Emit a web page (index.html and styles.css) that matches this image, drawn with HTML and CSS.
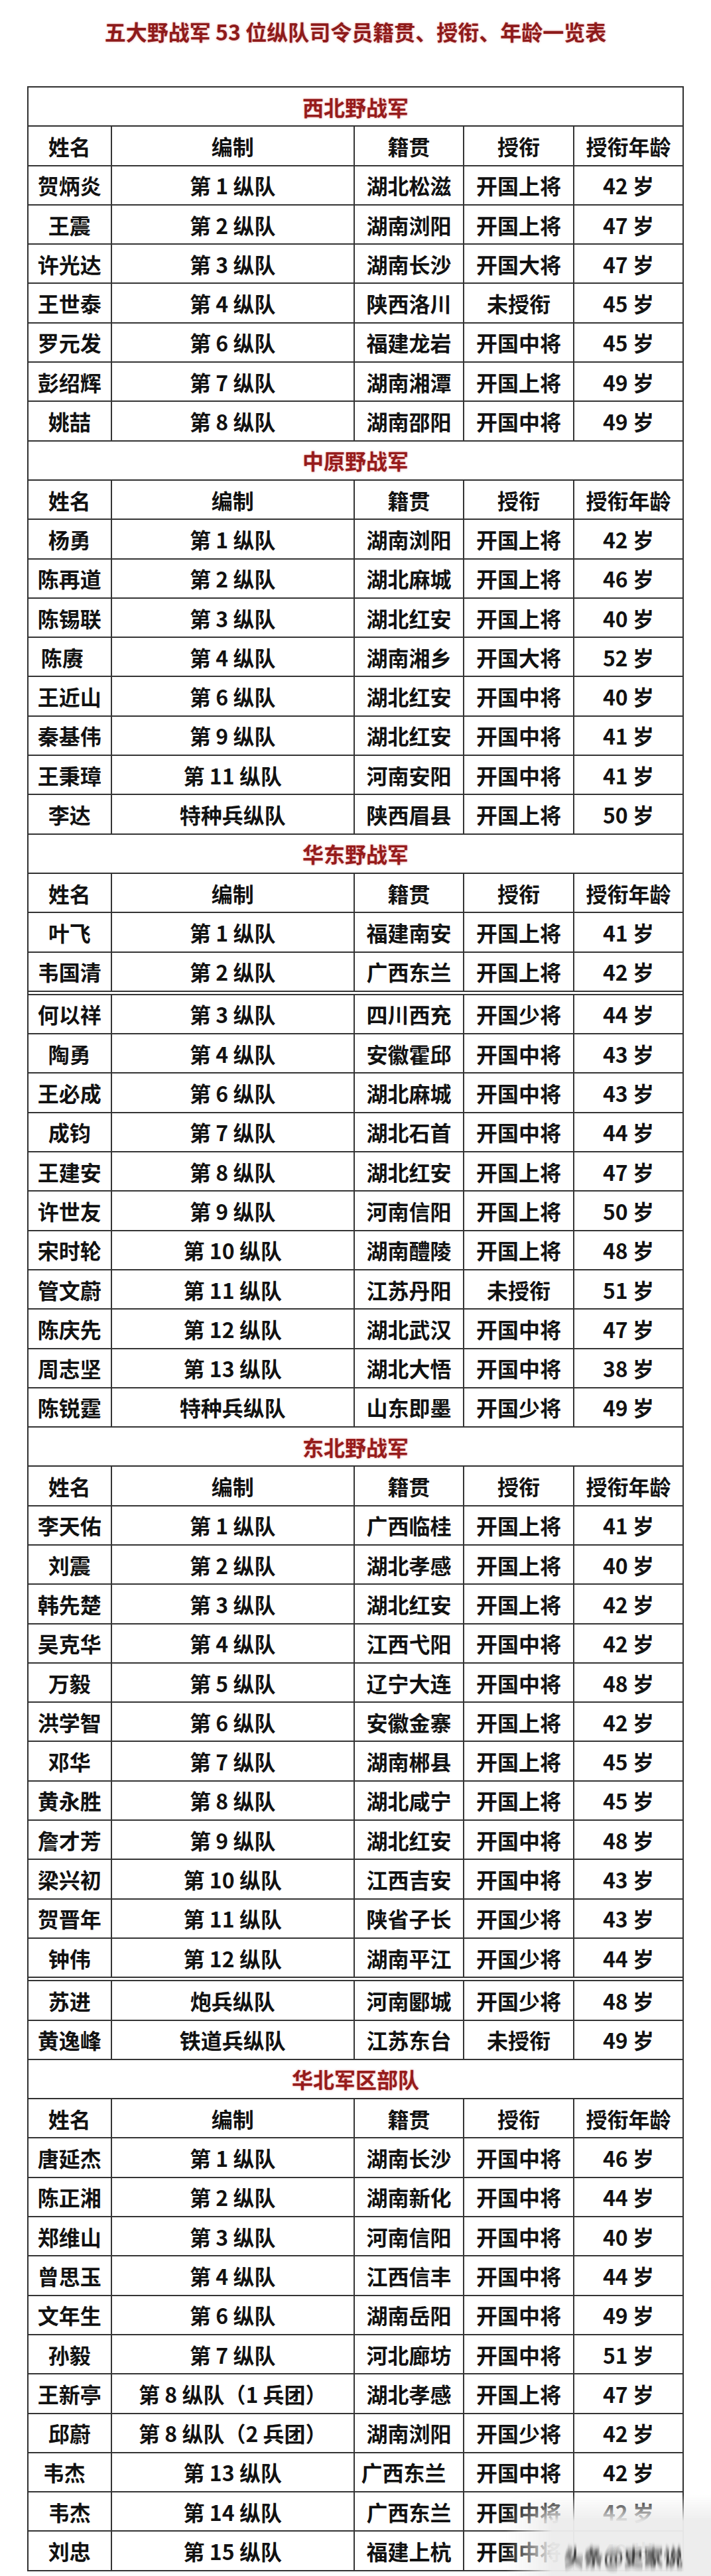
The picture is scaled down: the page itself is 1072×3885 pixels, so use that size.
FILE: index.html
```html
<!DOCTYPE html>
<html lang="zh-CN">
<head>
<meta charset="utf-8">
<title>五大野战军 53 位纵队司令员籍贯、授衔、年龄一览表</title>
<link rel="stylesheet" href="styles.css">
</head>
<body>
<div class="page">
  <h1 class="title">五大野战军 53 位纵队司令员籍贯、授衔、年龄一览表</h1>

  <div class="sheet">
    <div class="sec">西北野战军</div>
    <div class="row"><span>姓名</span><span>编制</span><span>籍贯</span><span>授衔</span><span>授衔年龄</span></div>
    <div class="row"><span>贺炳炎</span><span>第 1 纵队</span><span>湖北松滋</span><span>开国上将</span><span>42 岁</span></div>
    <div class="row"><span>王震</span><span>第 2 纵队</span><span>湖南浏阳</span><span>开国上将</span><span>47 岁</span></div>
    <div class="row"><span>许光达</span><span>第 3 纵队</span><span>湖南长沙</span><span>开国大将</span><span>47 岁</span></div>
    <div class="row"><span>王世泰</span><span>第 4 纵队</span><span>陕西洛川</span><span>未授衔</span><span>45 岁</span></div>
    <div class="row"><span>罗元发</span><span>第 6 纵队</span><span>福建龙岩</span><span>开国中将</span><span>45 岁</span></div>
    <div class="row"><span>彭绍辉</span><span>第 7 纵队</span><span>湖南湘潭</span><span>开国上将</span><span>49 岁</span></div>
    <div class="row"><span>姚喆</span><span>第 8 纵队</span><span>湖南邵阳</span><span>开国中将</span><span>49 岁</span></div>

    <div class="sec">中原野战军</div>
    <div class="row"><span>姓名</span><span>编制</span><span>籍贯</span><span>授衔</span><span>授衔年龄</span></div>
    <div class="row"><span>杨勇</span><span>第 1 纵队</span><span>湖南浏阳</span><span>开国上将</span><span>42 岁</span></div>
    <div class="row"><span>陈再道</span><span>第 2 纵队</span><span>湖北麻城</span><span>开国上将</span><span>46 岁</span></div>
    <div class="row"><span>陈锡联</span><span>第 3 纵队</span><span>湖北红安</span><span>开国上将</span><span>40 岁</span></div>
    <div class="row"><span class="lean">陈赓</span><span>第 4 纵队</span><span>湖南湘乡</span><span>开国大将</span><span>52 岁</span></div>
    <div class="row"><span>王近山</span><span>第 6 纵队</span><span>湖北红安</span><span>开国中将</span><span>40 岁</span></div>
    <div class="row"><span>秦基伟</span><span>第 9 纵队</span><span>湖北红安</span><span>开国中将</span><span>41 岁</span></div>
    <div class="row"><span>王秉璋</span><span>第 11 纵队</span><span>河南安阳</span><span>开国中将</span><span>41 岁</span></div>
    <div class="row"><span>李达</span><span>特种兵纵队</span><span>陕西眉县</span><span>开国上将</span><span>50 岁</span></div>

    <div class="sec">华东野战军</div>
    <div class="row"><span>姓名</span><span>编制</span><span>籍贯</span><span>授衔</span><span>授衔年龄</span></div>
    <div class="row"><span>叶飞</span><span>第 1 纵队</span><span>福建南安</span><span>开国上将</span><span>41 岁</span></div>
    <div class="row"><span>韦国清</span><span>第 2 纵队</span><span>广西东兰</span><span>开国上将</span><span>42 岁</span></div>
    <div class="row seam"><span>何以祥</span><span>第 3 纵队</span><span>四川西充</span><span>开国少将</span><span>44 岁</span></div>
    <div class="row"><span>陶勇</span><span>第 4 纵队</span><span>安徽霍邱</span><span>开国中将</span><span>43 岁</span></div>
    <div class="row"><span>王必成</span><span>第 6 纵队</span><span>湖北麻城</span><span>开国中将</span><span>43 岁</span></div>
    <div class="row"><span>成钧</span><span>第 7 纵队</span><span>湖北石首</span><span>开国中将</span><span>44 岁</span></div>
    <div class="row"><span>王建安</span><span>第 8 纵队</span><span>湖北红安</span><span>开国上将</span><span>47 岁</span></div>
    <div class="row"><span>许世友</span><span>第 9 纵队</span><span>河南信阳</span><span>开国上将</span><span>50 岁</span></div>
    <div class="row"><span>宋时轮</span><span>第 10 纵队</span><span>湖南醴陵</span><span>开国上将</span><span>48 岁</span></div>
    <div class="row"><span>管文蔚</span><span>第 11 纵队</span><span>江苏丹阳</span><span>未授衔</span><span>51 岁</span></div>
    <div class="row"><span>陈庆先</span><span>第 12 纵队</span><span>湖北武汉</span><span>开国中将</span><span>47 岁</span></div>
    <div class="row"><span>周志坚</span><span>第 13 纵队</span><span>湖北大悟</span><span>开国中将</span><span>38 岁</span></div>
    <div class="row"><span>陈锐霆</span><span>特种兵纵队</span><span>山东即墨</span><span>开国少将</span><span>49 岁</span></div>

    <div class="sec">东北野战军</div>
    <div class="row"><span>姓名</span><span>编制</span><span>籍贯</span><span>授衔</span><span>授衔年龄</span></div>
    <div class="row"><span>李天佑</span><span>第 1 纵队</span><span>广西临桂</span><span>开国上将</span><span>41 岁</span></div>
    <div class="row"><span>刘震</span><span>第 2 纵队</span><span>湖北孝感</span><span>开国上将</span><span>40 岁</span></div>
    <div class="row"><span>韩先楚</span><span>第 3 纵队</span><span>湖北红安</span><span>开国上将</span><span>42 岁</span></div>
    <div class="row"><span>吴克华</span><span>第 4 纵队</span><span>江西弋阳</span><span>开国中将</span><span>42 岁</span></div>
    <div class="row"><span>万毅</span><span>第 5 纵队</span><span>辽宁大连</span><span>开国中将</span><span>48 岁</span></div>
    <div class="row"><span>洪学智</span><span>第 6 纵队</span><span>安徽金寨</span><span>开国上将</span><span>42 岁</span></div>
    <div class="row"><span>邓华</span><span>第 7 纵队</span><span>湖南郴县</span><span>开国上将</span><span>45 岁</span></div>
    <div class="row"><span>黄永胜</span><span>第 8 纵队</span><span>湖北咸宁</span><span>开国上将</span><span>45 岁</span></div>
    <div class="row"><span>詹才芳</span><span>第 9 纵队</span><span>湖北红安</span><span>开国中将</span><span>48 岁</span></div>
    <div class="row"><span>梁兴初</span><span>第 10 纵队</span><span>江西吉安</span><span>开国中将</span><span>43 岁</span></div>
    <div class="row"><span>贺晋年</span><span>第 11 纵队</span><span>陕省子长</span><span>开国少将</span><span>43 岁</span></div>
    <div class="row"><span>钟伟</span><span>第 12 纵队</span><span>湖南平江</span><span>开国少将</span><span>44 岁</span></div>
    <div class="row seam"><span>苏进</span><span>炮兵纵队</span><span>河南郾城</span><span>开国少将</span><span>48 岁</span></div>
    <div class="row"><span>黄逸峰</span><span>铁道兵纵队</span><span>江苏东台</span><span>未授衔</span><span>49 岁</span></div>

    <div class="sec">华北军区部队</div>
    <div class="row"><span>姓名</span><span>编制</span><span>籍贯</span><span>授衔</span><span>授衔年龄</span></div>
    <div class="row"><span>唐延杰</span><span>第 1 纵队</span><span>湖南长沙</span><span>开国中将</span><span>46 岁</span></div>
    <div class="row"><span>陈正湘</span><span>第 2 纵队</span><span>湖南新化</span><span>开国中将</span><span>44 岁</span></div>
    <div class="row"><span>郑维山</span><span>第 3 纵队</span><span>河南信阳</span><span>开国中将</span><span>40 岁</span></div>
    <div class="row"><span>曾思玉</span><span>第 4 纵队</span><span>江西信丰</span><span>开国中将</span><span>44 岁</span></div>
    <div class="row"><span>文年生</span><span>第 6 纵队</span><span>湖南岳阳</span><span>开国中将</span><span>49 岁</span></div>
    <div class="row"><span>孙毅</span><span>第 7 纵队</span><span>河北廊坊</span><span>开国中将</span><span>51 岁</span></div>
    <div class="row"><span>王新亭</span><span>第 8 纵队（1 兵团）</span><span>湖北孝感</span><span>开国上将</span><span>47 岁</span></div>
    <div class="row"><span>邱蔚</span><span>第 8 纵队（2 兵团）</span><span>湖南浏阳</span><span>开国少将</span><span>42 岁</span></div>
    <div class="row shifted"><span>韦杰</span><span>第 13 纵队</span><span>广西东兰</span><span>开国中将</span><span>42 岁</span></div>
    <div class="row"><span>韦杰</span><span>第 14 纵队</span><span>广西东兰</span><span>开国中将</span><span>42 岁</span></div>
    <div class="row"><span>刘忠</span><span>第 15 纵队</span><span>福建上杭</span><span>开国中将</span><span>49 岁</span></div>
  </div>

  <div class="watermark" aria-hidden="true">
    <span class="wm-text">头条@史家说</span>
  </div>
</div>
<svg class="defs" width="0" height="0" aria-hidden="true">
  <filter id="vsmear"><feGaussianBlur stdDeviation="0.6 4"/></filter>
</svg>
</body>
</html>
```

FILE: styles.css
```css
html, body {
  margin: 0;
  padding: 0;
  background: #ffffff;
}

body {
  font-family: "Noto Sans CJK SC", "Noto Sans", "Liberation Sans", sans-serif;
  color: #141414;
}

.page {
  position: relative;
  width: 1072px;
  height: 3885px;
  overflow: hidden;
}

.title {
  margin: 0;
  height: 130px;
  box-sizing: border-box;
  padding-top: 28px;
  line-height: 38px;
  font-size: 32px;
  font-weight: 700;
  text-align: center;
  color: #8e1b1b;
  text-shadow: 0 0 3px rgba(214, 70, 70, 0.55);
  letter-spacing: 0;
}

.sheet {
  margin-left: 41px;
  width: 990px;
  box-sizing: border-box;
  border-left: 2px solid #303030;
  border-right: 2px solid #303030;
  border-top: 2px solid #303030;
}

.sec {
  height: 59.3px;
  box-sizing: border-box;
  border-bottom: 2px solid #303030;
  display: flex;
  align-items: center;
  justify-content: center;
  font-size: 32px;
  font-weight: 700;
  color: #961c1c;
  text-shadow: 0 0 3px rgba(214, 70, 70, 0.55);
}

.row {
  display: grid;
  grid-template-columns: 125.5px 366.5px 165px 166px 163px;
  height: 59.3px;
  box-sizing: border-box;
  border-bottom: 2px solid #343434;
}

.row > span {
  display: flex;
  align-items: center;
  justify-content: center;
  border-right: 2px solid #343434;
  font-size: 32px;
  font-weight: 700;
  line-height: 1;
  white-space: nowrap;
  color: #121212;
}

.row > span:last-child {
  border-right: none;
}

.row.seam {
  margin-top: 3px;
  height: 61.3px;
  border-top: 2px solid #343434;
}

.lean {
  padding-right: 22px;
}

.shifted > span:nth-child(1),
.shifted > span:nth-child(3) {
  padding-right: 16px;
}

.watermark {
  position: absolute;
  left: 762px;
  top: 3762px;
  width: 310px;
  height: 123px;
  background: rgba(236, 236, 236, 0.96);
  -webkit-mask-image: linear-gradient(to right, transparent 0, #000 70px),
                      linear-gradient(to bottom, transparent 0, #000 40px);
  -webkit-mask-composite: source-in;
  mask-image: linear-gradient(to right, transparent 0, #000 70px),
              linear-gradient(to bottom, transparent 0, #000 40px);
  mask-composite: intersect;
}

.wm-text {
  position: absolute;
  left: 88px;
  top: 76px;
  font-size: 30px;
  font-weight: 700;
  line-height: 34px;
  color: #1a1a1a;
  white-space: nowrap;
  filter: url(#vsmear);
  opacity: 0.85;
}

.defs {
  position: absolute;
  width: 0;
  height: 0;
}
```
